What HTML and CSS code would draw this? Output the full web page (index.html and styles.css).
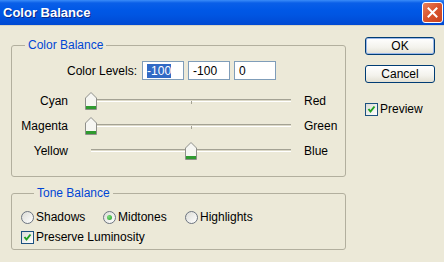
FILE: index.html
```html
<!DOCTYPE html>
<html lang="en">
<head>
    <meta charset="UTF-8">
    <title>Color Balance</title>
    <link rel="stylesheet" href="styles.css">
</head>
<body>
    <div class="dialog">
        <!-- 标题栏 -->
        <div class="titlebar">
            <span class="title">Color Balance</span>
            <span class="close">
                <svg width="11" height="11" viewBox="0 0 11 11"><path d="M1.5 1.5 L9.5 9.5 M9.5 1.5 L1.5 9.5" stroke="#fff" stroke-width="2" stroke-linecap="square"/></svg>
            </span>
        </div>

        <div class="main">
            <div class="groups">
                <!-- Color Balance -->
                <fieldset class="group group-color">
                    <legend>Color Balance</legend>
                    <div class="levels">
                        <span class="levels-label">Color Levels:</span>
                        <div class="field"><span class="sel">-100</span></div>
                        <div class="field">-100</div>
                        <div class="field">0</div>
                    </div>
                    <div class="slider-row">
                        <span class="side-left">Cyan</span>
                        <div class="slider">
                            <span class="track"></span>
                            <span class="tick"></span>
                            <svg class="thumb" style="left:0px" width="12" height="18" viewBox="0 0 12 18"><path d="M0.5 6 L6 0.5 L11.5 6 V17.5 H0.5 Z" fill="#f6f6f2" stroke="#8e8f8a"/><rect x="1" y="14" width="10" height="3" fill="#2f9a2f"/></svg>
                        </div>
                        <span class="side-right">Red</span>
                    </div>
                    <div class="slider-row">
                        <span class="side-left">Magenta</span>
                        <div class="slider">
                            <span class="track"></span>
                            <span class="tick"></span>
                            <svg class="thumb" style="left:0px" width="12" height="18" viewBox="0 0 12 18"><path d="M0.5 6 L6 0.5 L11.5 6 V17.5 H0.5 Z" fill="#f6f6f2" stroke="#8e8f8a"/><rect x="1" y="14" width="10" height="3" fill="#2f9a2f"/></svg>
                        </div>
                        <span class="side-right">Green</span>
                    </div>
                    <div class="slider-row">
                        <span class="side-left">Yellow</span>
                        <div class="slider">
                            <span class="track"></span>
                            <span class="tick"></span>
                            <svg class="thumb" style="left:100px" width="12" height="18" viewBox="0 0 12 18"><path d="M0.5 6 L6 0.5 L11.5 6 V17.5 H0.5 Z" fill="#f6f6f2" stroke="#8e8f8a"/><rect x="1" y="14" width="10" height="3" fill="#2f9a2f"/></svg>
                        </div>
                        <span class="side-right">Blue</span>
                    </div>
                </fieldset>

                <!-- Tone Balance -->
                <fieldset class="group group-tone">
                    <legend>Tone Balance</legend>
                    <div class="radios">
                        <label class="option"><span class="radio"></span>Shadows</label>
                        <label class="option"><span class="radio checked"></span>Midtones</label>
                        <label class="option"><span class="radio"></span>Highlights</label>
                    </div>
                    <label class="check-line">
                        <span class="checkbox"><svg width="11" height="11" viewBox="0 0 11 11"><path d="M2.5 5 L4.5 7.5 L8.5 2.5" fill="none" stroke="#21a121" stroke-width="2"/></svg></span>Preserve Luminosity
                    </label>
                </fieldset>
            </div>

            <!-- 按钮 -->
            <div class="actions">
                <button class="btn btn-default">OK</button>
                <button class="btn">Cancel</button>
                <label class="check-line preview">
                    <span class="checkbox"><svg width="11" height="11" viewBox="0 0 11 11"><path d="M2.5 5 L4.5 7.5 L8.5 2.5" fill="none" stroke="#21a121" stroke-width="2"/></svg></span>Preview
                </label>
            </div>
        </div>
    </div>
</body>
</html>
```

FILE: styles.css
```css
* {
    margin: 0;
    padding: 0;
    box-sizing: border-box;
}
body {
    font-family: "Liberation Sans", Arial, sans-serif;
    font-size: 12px;
    color: #000;
    background: #ece9d8;
}

.dialog {
    width: 444px;
    height: 262px;
    background: #ece9d8;
    overflow: hidden;
}
.titlebar {
    display: flex;
    align-items: center;
    justify-content: space-between;
    height: 26px;
    padding: 0 1px 0 3px;
    background: linear-gradient(#3a8cf8 0, #0a5fe8 3px, #0058e6 10px, #0055e2 60%, #0049d2 100%);
    border-bottom: 1px solid #d8d4c4;
}
.title {
    color: #fff;
    font-weight: bold;
    font-size: 13px;
    text-shadow: 1px 1px 0 #0a2a8a;
}
.close {
    display: flex;
    align-items: center;
    justify-content: center;
    width: 21px;
    height: 21px;
    border: 1px solid #fff;
    border-radius: 3px;
    background: linear-gradient(135deg, #e8805c, #d9532c 50%, #c8431f);
}

.main {
    display: flex;
}
.groups {
    width: 335px;
    margin-left: 11px;
    padding-top: 12px;
}

/* 分组框 */
.group {
    border: 1px solid #b2af9e;
    border-radius: 3px;
    padding: 0;
}
.group legend {
    margin-left: 13px;
    padding: 0 3px;
    color: #0046d5;
    line-height: 14px;
}
.group-color {
    padding-top: 9px;
    padding-bottom: 13px;
}
.group-tone {
    margin-top: 9px;
    padding-top: 9px;
    padding-bottom: 4px;
    padding-left: 9px;
}

.levels {
    display: flex;
    align-items: center;
    height: 19px;
    padding-left: 55px;
}
.levels-label {
    margin-right: 5px;
}
.field {
    display: flex;
    align-items: center;
    width: 42px;
    height: 19px;
    margin-right: 4px;
    padding-left: 4px;
    background: #fff;
    border: 1px solid #7f9db9;
}
.sel {
    background: #316ac5;
    color: #fff;
    line-height: 14px;
}

/* 滑块 */
.slider-row {
    display: flex;
    align-items: center;
    height: 25px;
}
.slider-row:nth-of-type(2) {
    margin-top: 8px;
}
.side-left {
    width: 56px;
    text-align: right;
}
.side-right {
    margin-left: 7px;
}
.slider {
    position: relative;
    width: 212px;
    height: 25px;
    margin-left: 17px;
}
.track {
    position: absolute;
    left: 6px;
    right: 6px;
    top: 11px;
    height: 3px;
    border-top: 1px solid #a4a294;
    border-bottom: 1px solid #fff;
    background: #dcd9c8;
}
.tick {
    position: absolute;
    left: 106px;
    top: 13px;
    width: 1px;
    height: 3px;
    background: #a4a294;
}
.thumb {
    position: absolute;
    top: 4px;
    display: block;
}

/* 单选 / 复选 */
.radios {
    display: flex;
    align-items: center;
    height: 16px;
}
.option {
    display: flex;
    align-items: center;
    width: 82px;
}
.radio {
    width: 13px;
    height: 13px;
    margin-right: 2px;
    border: 1px solid #6c7480;
    border-radius: 50%;
    background: linear-gradient(135deg, #dcdcd6, #fff);
    display: flex;
    align-items: center;
    justify-content: center;
}
.radio.checked::after {
    content: "";
    width: 5px;
    height: 5px;
    border-radius: 50%;
    background: radial-gradient(circle at 35% 35%, #7ddc7d, #21a121);
}
.check-line {
    display: flex;
    align-items: center;
    height: 16px;
    margin-top: 4px;
}
.checkbox {
    display: flex;
    align-items: center;
    justify-content: center;
    width: 13px;
    height: 13px;
    margin-right: 2px;
    border: 1px solid #1c5180;
    background: linear-gradient(135deg, #dcdcd6, #fff);
}

/* 右侧按钮 */
.actions {
    display: flex;
    flex-direction: column;
    width: 70px;
    margin-left: 19px;
    padding-top: 11px;
}
.btn {
    width: 70px;
    height: 18px;
    margin-bottom: 10px;
    font-family: inherit;
    font-size: 12px;
    color: #000;
    border: 1px solid #003c74;
    border-radius: 3px;
    background: linear-gradient(#fff, #f3f2ec 60%, #e3e0d3);
}
.btn-default {
    box-shadow: inset 0 0 0 1px #9bb8ea;
}
.preview {
    margin-top: 8px;
}
```
